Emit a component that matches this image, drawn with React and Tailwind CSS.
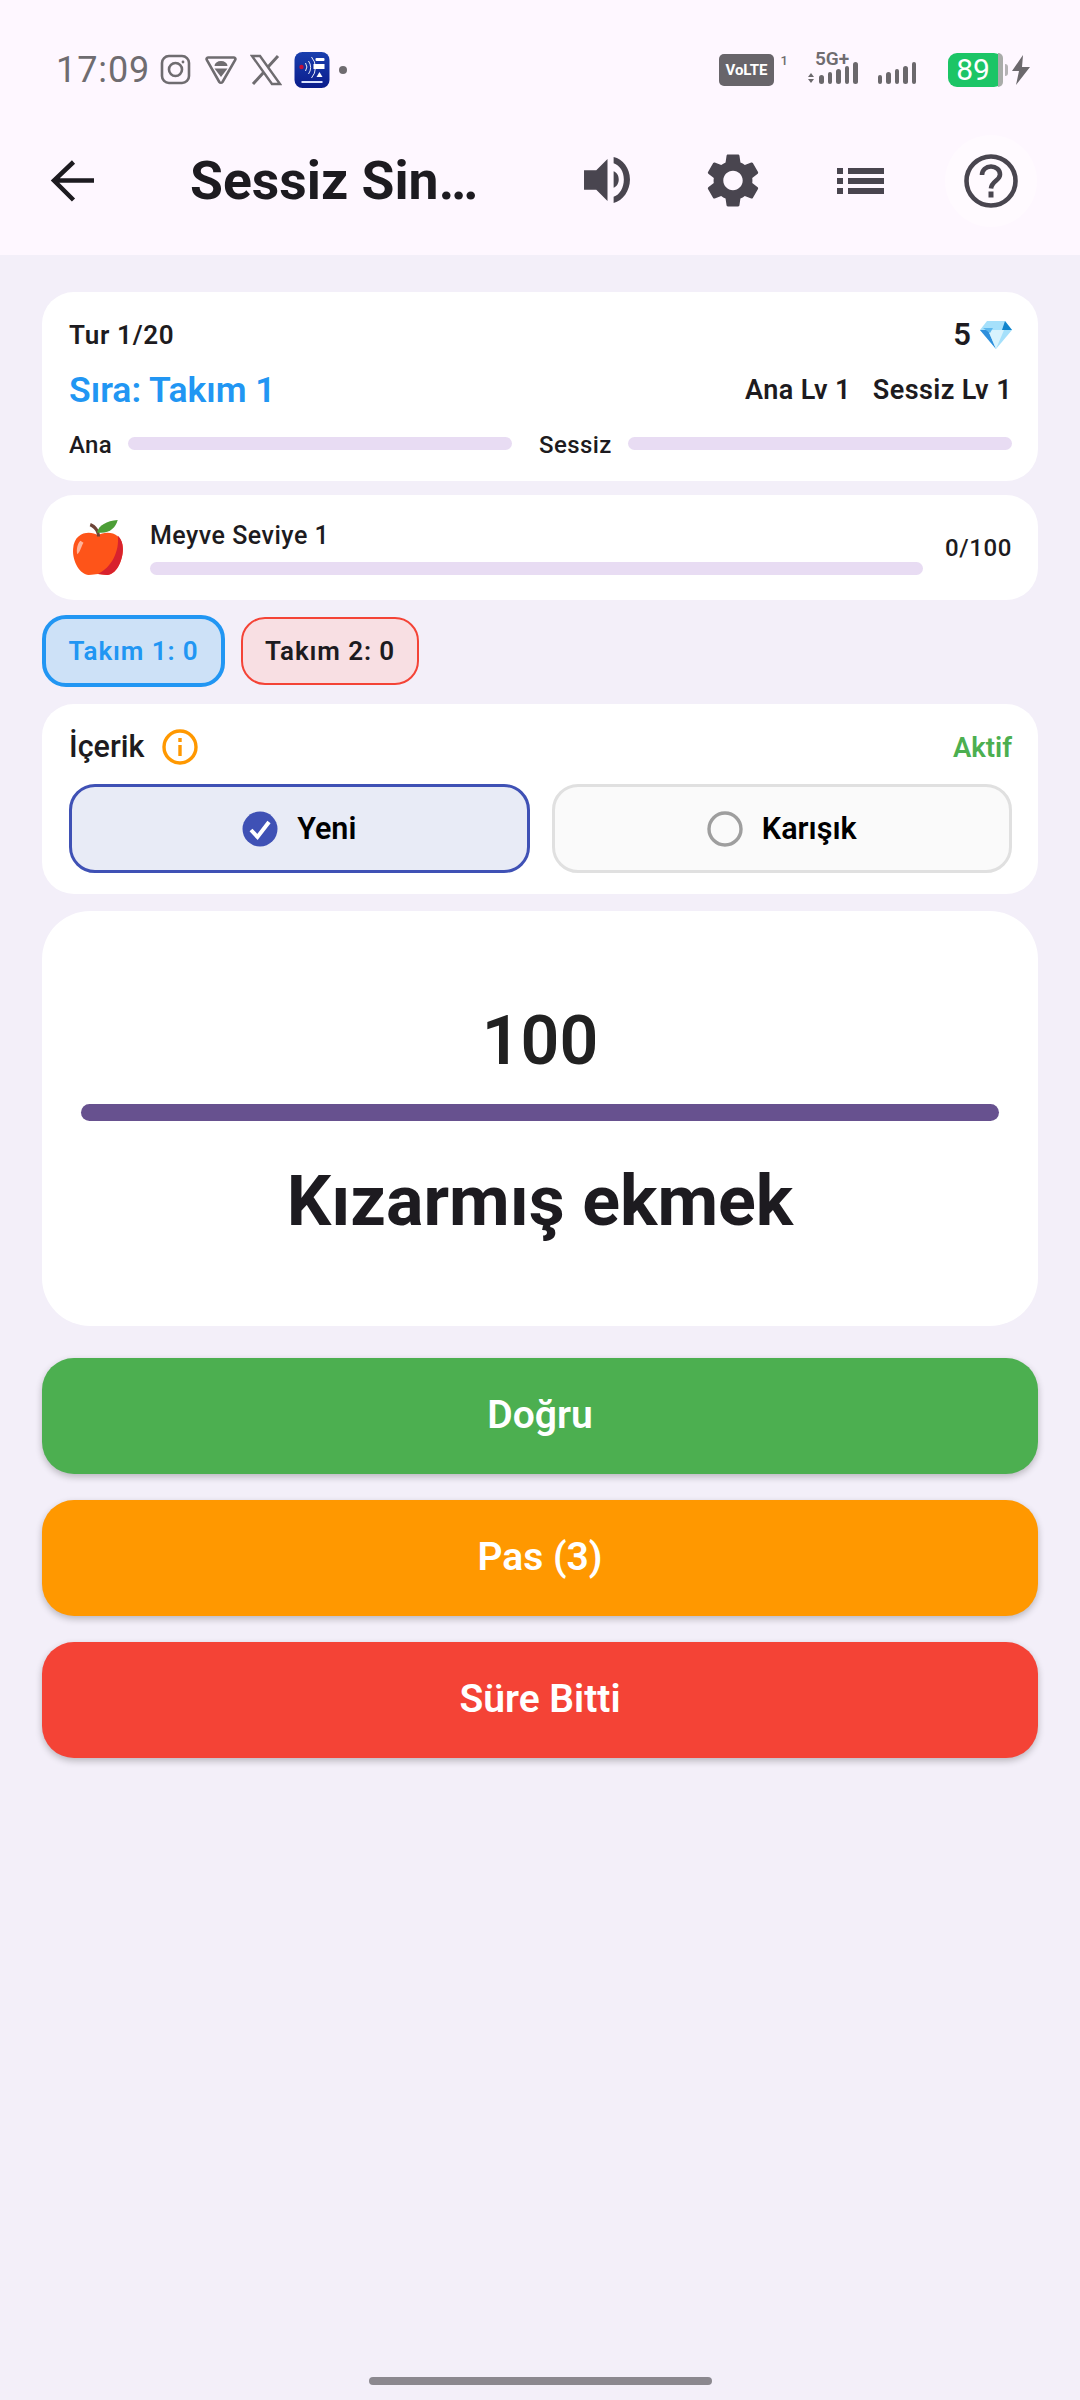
import React from "react";

const Bar = ({ className = "" }) => <div className={`h-[13px] rounded-full bg-[#e8dcf3] ${className}`} />;

function Signal() {
  const hs = [9, 12, 15, 18, 22];
  return (
    <div className="flex items-end gap-[4px]">
      {hs.map((h, i) => (
        <div key={i} className="w-[4.5px] rounded-full bg-[#6b686c]" style={{ height: h }} />
      ))}
    </div>
  );
}

function StatusBar() {
  return (
    <div className="flex h-[70px] items-center pl-[56px] text-[#6f6c70]">
      <span className="w-[92px] text-[36px] leading-none tracking-[0.9px] font-normal">17:09</span>
      <svg className="ml-[12px] h-[32px] w-[32px]" viewBox="0 0 32 32" fill="none" stroke="#6f6c70" strokeWidth="2.6">
        <rect x="2" y="2" width="27" height="27" rx="7" />
        <circle cx="15.5" cy="15.5" r="6.5" />
        <circle cx="23" cy="8" r="1.4" fill="#6f6c70" stroke="none" />
      </svg>
      <svg className="ml-[13px] h-[32px] w-[32px]" viewBox="0 0 32 32" fill="none">
        <path d="M3 3.5h26a1.5 1.5 0 0 1 1.2 2.3L17.5 28a2 2 0 0 1-3.2 0L1.8 5.800A1.500 1.500 0 0 1 3 3.500z" stroke="#6f6c70" strokeWidth="2.6" />
        <path d="M9.500 12a6.500 5 0 0 1 13 0zM9.500 14.500h13L16 23z" fill="#6f6c70" />
      </svg>
      <svg className="ml-[13px] h-[32px] w-[32px]" viewBox="0 0 32 32" fill="none">
        <path d="M2 2h8l20 28h-8z" stroke="#6f6c70" strokeWidth="2.4" />
        <path d="M28 2 18 13M14 18 3 30" stroke="#6f6c70" strokeWidth="3" />
      </svg>
      <svg className="ml-[12px] h-[36px] w-[36px]" viewBox="0 0 35 36">
        <defs>
          <linearGradient id="radar" x1="0" y1="0" x2="0" y2="1">
            <stop offset="0" stopColor="#1a3fae" />
            <stop offset="1" stopColor="#0a1c8c" />
          </linearGradient>
        </defs>
        <rect width="35" height="36" rx="8" fill="url(#radar)" />
        <circle cx="7" cy="15" r="2.200" fill="#c2103a" />
        <path d="M11 11a7 7 0 0 1 0 8M14 9a11 11 0 0 1 0 13M17 5a16 16 0 0 1 0 21" stroke="#fff" strokeWidth="0.9" fill="none" />
        <rect x="21" y="6" width="9" height="3" rx="1" fill="#fff" />
        <rect x="19" y="12" width="11" height="5" fill="#fff" />
        <path d="M22 25l3-5 3 5z" fill="#fff" />
        <rect x="7" y="29" width="21" height="2" fill="#dbe3ff" />
      </svg>
      <span className="ml-[9px] h-[8px] w-[8px] rounded-full bg-[#6f6c70]" />

      <div className="relative ml-[372px] flex h-[32px] w-[55px] items-center justify-center rounded-[5px] bg-[#68656a] text-[15px] font-bold text-white">
        VoLTE
        <span className="absolute right-[-14px] top-[0px] text-[13px] leading-none font-medium text-[#6f6c70]">1</span>
      </div>

      <div className="relative ml-[34px] mt-[6px] flex items-end">
        <span className="absolute left-[7px] top-[-13px] text-[19px] leading-none font-semibold">5G+</span>
        <span className="mr-[5px] flex flex-col items-center gap-[2px] pb-[1px]">
          <span className="h-0 w-0 border-x-[3.500px] border-b-[4px] border-x-transparent border-b-[#6b686c]" />
          <span className="h-0 w-0 border-x-[3.500px] border-t-[4px] border-x-transparent border-t-[#6b686c]" />
        </span>
        <Signal />
      </div>

      <div className="ml-[20px] mt-[6px]"><Signal /></div>

      <div className="ml-[32px] flex h-[34px] w-[55px] rounded-[9px] bg-[#1cc566]">
        <span className="w-[50px] text-center text-[30px] leading-[34px] font-normal text-white">89</span>
        <span className="w-[5px] rounded-r-[9px] bg-[#a9aca9]" />
      </div>
      <span className="ml-[2px] h-[12px] w-[3px] rounded-r-sm bg-[#b5b3b5]" />
      <svg className="ml-[3px] h-[30px] w-[20px]" viewBox="0 0 20 30"><path d="M12 0 1 16h7L5 30 19 12h-8z" fill="#6b686c" /></svg>
    </div>
  );
}

function TopBar() {
  return (
    <div className="mt-[23px] flex h-[105px] items-center pl-[50px] text-[#1d1b20]">
      <svg className="h-[44px] w-[44px] shrink-0" viewBox="0 0 44 44" fill="none" stroke="#1d1b20" strokeWidth="4.5">
        <path d="M44 21.500H5M23.500 3 4 21.500 23.500 41" />
      </svg>
      <div className="ml-[96px] w-[300px] shrink-0 text-[53.500px] leading-none font-bold whitespace-nowrap">Sessiz Sin…</div>
      <svg className="ml-[93px] h-[49px] w-[49px] shrink-0" viewBox="0 0 46 48">
        <path d="M0 14h12L23 3v41L12 33H0z" fill="#49454f" />
        <path d="M29 1c9 2 16 11 16 22s-7 21-16 23v-6c6-2 10-9 10-17S35 9 29 7zM29 15c3 1 5 4 5 8s-2 7-5 8z" fill="#49454f" />
      </svg>
      <svg className="ml-[74px] h-[55px] w-[54px] shrink-0" viewBox="2.200 1.800 19.600 20.400">
        <path fill="#49454f" d="M19.140 12.940c.04-.3.06-.61.06-.94 0-.32-.02-.64-.07-.94l2.030-1.580a.49.49 0 0 0 .12-.61l-1.920-3.320a.488.488 0 0 0-.59-.22l-2.390.96c-.5-.38-1.030-.7-1.620-.94l-.36-2.540a.484.484 0 0 0-.48-.41h-3.840c-.24 0-.43.17-.47.41l-.36 2.540c-.59.24-1.130.57-1.620.94l-2.390-.96c-.22-.08-.47 0-.59.22L2.740 8.870c-.12.21-.08.47.12.61l2.030 1.580c-.05.3-.09.63-.09.94s.02.64.07.94l-2.030 1.580a.49.49 0 0 0-.12.61l1.920 3.320c.12.22.37.29.59.22l2.390-.96c.5.38 1.030.7 1.620.94l.36 2.540c.05.24.24.41.48.41h3.840c.24 0 .44-.17.47-.41l.36-2.540c.59-.24 1.130-.56 1.620-.94l2.390.96c.22.08.47 0 .59-.22l1.920-3.320c.12-.22.07-.47-.12-.61l-2.010-1.580zM12 15.600c-1.980 0-3.600-1.620-3.600-3.600s1.620-3.600 3.600-3.600 3.600 1.620 3.600 3.600-1.620 3.600-3.600 3.600z" />
      </svg>
      <svg className="ml-[76px] h-[26px] w-[49px] shrink-0" viewBox="0 0 47 26" fill="#49454f">
        <rect x="0" y="0" width="6" height="6" /><rect x="11" y="0" width="36" height="6" />
        <rect x="0" y="10" width="6" height="6" /><rect x="11" y="10" width="36" height="6" />
        <rect x="0" y="20" width="6" height="6" /><rect x="11" y="20" width="36" height="6" />
      </svg>
      <div className="ml-[60px] flex h-[92px] w-[92px] shrink-0 items-center justify-center rounded-full bg-[#fffaff]">
        <svg className="h-[54px] w-[54px]" viewBox="0 0 54 54" fill="none" stroke="#49454f" strokeWidth="4.600">
          <circle cx="27" cy="27" r="24.500" />
          <path d="M18 21c0-5 4-8.500 9-8.500s9 3.500 9 8c0 6-8.500 6.500-9 14" />
          <path d="M27 37.500v6" strokeWidth="5" />
        </svg>
      </div>
    </div>
  );
}

function Card({ className = "", children }) {
  return <div className={`rounded-[32px] bg-white ${className}`}>{children}</div>;
}

function Gem() {
  return (
    <svg className="ml-[9px] h-[30px] w-[32px]" viewBox="0 0 32 30">
      <path d="M7 1h18l7 9-16 19L0 10z" fill="#a5e0fb" />
      <path d="M0 10 16 29 8 10z" fill="#2f8fdc" />
      <path d="M32 10 25 1l-3 9z" fill="#0f84cc" />
      <path d="M8 10l8 19 8-19z" fill="#d8f3fd" />
      <path d="M3 8h10l-3 5z" fill="#5cb8ef" />
    </svg>
  );
}

function Apple() {
  return (
    <svg className="h-[56px] w-[52px]" viewBox="0 0 50 54">
      <path d="M25 15C18 10 2 11 1 28c-1 12 7 25 15 25 4 0 6-1 9-1s5 1 9 1c8 0 15-13 15-25C49 11 32 10 25 15z" fill="#fe5419" />
      <path d="M34 53c8 0 15-13 15-25 0-6-2-10-5-13 2 15-6 31-19 37 3 0 5 1 9 1z" fill="#d8222e" />
      <path d="M8 20c-3 3-4 9-3 13 3-2 4-8 6-11z" fill="#ffb49a" />
      <path d="M24 16c0-5-3-8-7-10l1-3c5 2 9 7 9 13z" fill="#6d4437" />
      <path d="M24 12C26 5 33 1 44 0c-2 8-9 14-20 12z" fill="#4c9e36" />
    </svg>
  );
}

function Action({ color, children }) {
  return (
    <button className={`flex h-[116px] w-full items-center justify-center rounded-[32px] pb-[1px] text-[39px] font-semibold text-white shadow-[0_3px_7px_rgba(0,0,0,0.24)] ${color}`}>
      {children}
    </button>
  );
}

export default function App() {
  return (
    <div className="flex h-[2400px] w-[1080px] flex-col overflow-hidden bg-[#f3eff9] font-['Roboto',sans-serif] text-[#1d1b20]">
      <div className="h-[255px] bg-[#fef7ff] pt-[35px]">
        <StatusBar />
        <TopBar />
      </div>

      <div className="flex flex-1 flex-col px-[42px] pt-[37px]">
        <Card className="h-[189px] pl-[27px] pr-[26px] pt-[27px]">
          <div className="flex items-center justify-between">
            <span className="text-[26px] leading-[32px] font-semibold tracking-[0.7px]">Tur 1/20</span>
            <span className="flex items-center text-[31px] leading-[32px] font-semibold">5<Gem /></span>
          </div>
          <div className="mt-[19px] flex items-center justify-between">
            <span className="text-[35.500px] leading-[40px] font-semibold text-[#2196f3]">Sıra: Takım 1</span>
            <span className="flex gap-[22px] text-[27px] font-semibold tracking-[0.4px]"><span>Ana Lv 1</span><span>Sessiz Lv 1</span></span>
          </div>
          <div className="mt-[17px] flex items-center">
            <span className="text-[24px] leading-[34px] font-medium tracking-[0.3px]">Ana</span>
            <Bar className="ml-[16px] mb-[3px] flex-1" />
            <span className="ml-[27px] text-[24px] leading-[34px] font-medium tracking-[0.4px]">Sessiz</span>
            <Bar className="ml-[16px] mb-[3px] flex-1" />
          </div>
        </Card>

        <Card className="mt-[14px] flex h-[105px] items-center pl-[27px] pr-[26px]">
          <div className="ml-[3px] w-[53px]"><Apple /></div>
          <div className="ml-[25px] flex-1">
            <div className="text-[25px] leading-[32px] font-medium tracking-[0.5px]">Meyve Seviye 1</div>
            <Bar className="mt-[10px]" />
          </div>
          <span className="ml-[22px] text-[24px] font-medium tracking-[0.6px]">0/100</span>
        </Card>

        <div className="mt-[15px] flex items-center gap-[16px]">
          <div className="flex h-[72px] w-[183px] items-center justify-center rounded-[24px] border-[4.500px] border-[#2196f3] bg-[#cde1f7] pt-[1px] text-[26px] font-semibold tracking-[0.9px] text-[#2196f3]">Takım 1: 0</div>
          <div className="flex h-[68px] w-[178px] items-center justify-center rounded-[24px] border-[2.500px] border-[#f44336] bg-[#f8dfe3] pt-[1px] text-[26px] font-semibold tracking-[0.9px]">Takım 2: 0</div>
        </div>

        <Card className="mt-[17px] h-[190px] pl-[27px] pr-[26px] pt-[21px]">
          <div className="flex h-[44px] items-center">
            <span className="text-[30.500px] font-medium">İçerik</span>
            <svg className="ml-[18px] h-[36px] w-[36px]" viewBox="0 0 36 36" fill="none" stroke="#ff9800" strokeWidth="3.400">
              <circle cx="18" cy="18" r="16" />
              <path d="M18 16v11M18 9v4" />
            </svg>
            <span className="ml-auto pt-[2px] text-[27.500px] font-semibold text-[#4caf50]">Aktif</span>
          </div>
          <div className="mt-[15px] flex gap-[22px]">
            <div className="flex h-[89px] flex-1 items-center justify-center rounded-[26px] border-[3px] border-[#3f51b5] bg-[#e8ebf6]">
              <svg className="h-[36px] w-[36px]" viewBox="0 0 36 36">
                <circle cx="18" cy="18" r="17.500" fill="#3f51b5" />
                <path d="M9 19l6.500 7L27 11" fill="none" stroke="#fff" strokeWidth="4" />
              </svg>
              <span className="ml-[19px] text-[30.500px] font-semibold text-black">Yeni</span>
            </div>
            <div className="flex h-[89px] flex-1 items-center justify-center rounded-[26px] border-[3px] border-[#e0e0e0] bg-[#fafafa]">
              <svg className="h-[36px] w-[36px]" viewBox="0 0 36 36" fill="none" stroke="#9e9e9e" strokeWidth="3.400">
                <circle cx="18" cy="18" r="16" />
              </svg>
              <span className="ml-[19px] text-[30.500px] font-semibold text-black">Karışık</span>
            </div>
          </div>
        </Card>

        <Card className="mt-[17px] h-[415px] rounded-[48px] px-[39px] pt-[90px] text-center">
          <div className="text-[68px] leading-[80px] font-semibold text-[#212121]">100</div>
          <div className="mt-[23px] h-[17px] rounded-full bg-[#67518f]" />
          <div className="mt-[38px] text-[70px] leading-[84px] font-bold">Kızarmış ekmek</div>
        </Card>

        <div className="mt-[32px] flex flex-col gap-[26px]">
          <Action color="bg-[#4caf50]">Doğru</Action>
          <Action color="bg-[#ff9800]">Pas (3)</Action>
          <Action color="bg-[#f44336]">Süre Bitti</Action>
        </div>

        <div className="mt-auto mb-[15px] h-[8px] w-[343px] self-center rounded-full bg-[#8b888f]" />
      </div>
    </div>
  );
}
